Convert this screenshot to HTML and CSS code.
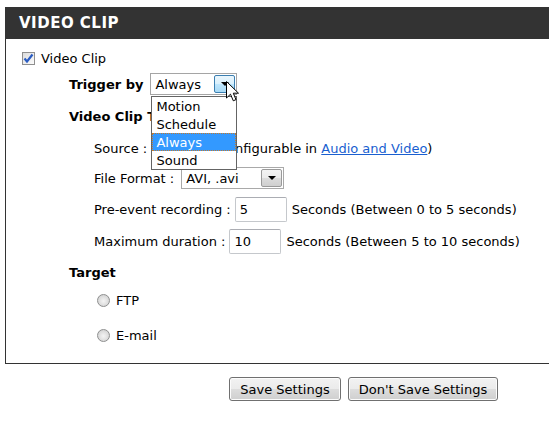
FILE: index.html
```html
<!DOCTYPE html>
<html lang="en">
<head>
	<meta charset="UTF-8">
	<title>Video Clip</title>
	<link rel="stylesheet" href="styles.css">
</head>
<body>
	<div class="page">
		<div class="panel">
			<div class="panel-head">VIDEO CLIP</div>
			<div class="panel-body">
				<label class="row row-check">
					<span class="checkbox">
						<svg width="11" height="11" viewBox="0 0 11 11"><path d="M1.5 5.5 L4 8.5 L9.5 1.5" fill="none" stroke="#2a5cc2" stroke-width="2.2"/></svg>
					</span>
					Video Clip
				</label>

				<div class="row row-trigger indent">
					<b class="label-b">Trigger by</b>
					<div class="select select-trigger">
						<span class="select-text">Always</span>
						<span class="select-btn hover"><i class="arrow-down"></i></span>
						<ul class="drop-list">
							<li>Motion</li>
							<li>Schedule</li>
							<li class="on">Always</li>
							<li>Sound</li>
						</ul>
						<svg class="cursor" width="14" height="22" viewBox="0 0 14 22"><path d="M0.5 0.5 L0.5 17 L4.5 13.2 L7.3 19.8 L10 18.6 L7.3 12.2 L12.5 12.2 Z" fill="#fff" stroke="#000" stroke-width="1"/></svg>
					</div>
				</div>

				<div class="row row-type indent">
					<b class="label-b">Video Clip Type</b>
				</div>

				<div class="row row-source indent-2">
					<span>Source : Stream 1 (configurable in <a href="javascript:;">Audio and Video</a>)</span>
				</div>

				<div class="row row-format indent-2 gap">
					<span>File Format :</span>
					<div class="select select-format">
						<span class="select-text">AVI, .avi</span>
						<span class="select-btn"><i class="arrow-down"></i></span>
					</div>
				</div>

				<div class="row row-pre indent-2 gap">
					<span>Pre-event recording :</span>
					<input type="text" class="text-in" value="5">
					<span>Seconds (Between 0 to 5 seconds)</span>
				</div>

				<div class="row row-max indent-2 gap">
					<span>Maximum duration :</span>
					<input type="text" class="text-in" value="10">
					<span>Seconds (Between 5 to 10 seconds)</span>
				</div>

				<div class="row row-target indent">
					<b class="label-b">Target</b>
				</div>

				<label class="row row-ftp indent-3">
					<span class="radio"></span>
					FTP
				</label>

				<label class="row row-mail indent-3">
					<span class="radio"></span>
					E-mail
				</label>
			</div>
		</div>

		<div class="buttons">
			<button class="btn btn-save">Save Settings</button>
			<button class="btn btn-cancel">Don't Save Settings</button>
		</div>
	</div>
</body>
</html>
```

FILE: styles.css
```css
* {
	box-sizing: border-box;
}

body {
	margin: 0;
	background: #fff;
	font-family: "DejaVu Sans", sans-serif;
	font-size: 13px;
	color: #000;
}

.page {
	width: 549px;
	height: 431px;
	overflow: hidden;
}

.panel {
	width: 620px;
	margin: 7px 0 0 5px;
	border: 1px solid #333;
	border-top: 0;
}

.panel-head {
	display: flex;
	align-items: center;
	height: 32px;
	padding-left: 13px;
	background: #333;
	color: #fff;
	font-size: 15px;
	font-weight: bold;
	letter-spacing: 0.5px;
}

.panel-body {
	display: flex;
	flex-direction: column;
	padding: 0 0 16px 16px;
}

.row {
	display: flex;
	align-items: center;
	height: 24px;
	white-space: nowrap;
}

.gap {
	gap: 6px;
}

.indent {
	padding-left: 47px;
}

.indent-2 {
	padding-left: 72px;
}

.indent-3 {
	padding-left: 75px;
}

.row-check {
	height: 20px;
	margin-top: 9px;
	gap: 6px;
}
.row-trigger { margin-top: 4px; }
.row-type { margin-top: 8px; }
.row-source { margin-top: 8px; }
.row-format { margin-top: 6px; }
.row-pre { height: 25px; margin-top: 7px; }
.row-max { height: 25px; margin-top: 7px; }
.row-target { margin-top: 6px; }
.row-ftp { margin-top: 4px; }
.row-mail { margin-top: 11px; }

.label-b {
	font-weight: bold;
}

a {
	color: #1a5fd0;
	text-decoration: underline;
}

/* checkbox and radio, drawn like the old windows ones */
.checkbox {
	display: flex;
	align-items: center;
	justify-content: center;
	width: 13px;
	height: 13px;
	border: 1px solid #8f8f8f;
	background: linear-gradient(135deg, #dcdcdc, #fbfbfb);
}

.radio {
	width: 13px;
	height: 13px;
	margin-right: 6px;
	border: 1px solid #8e8f8f;
	border-radius: 50%;
	background: radial-gradient(circle at 50% 55%, #f4f4f4 0, #e4e4e4 40%, #c9c9c9 100%);
}

/* selects */
.select {
	position: relative;
	display: flex;
	align-items: center;
	height: 22px;
	border: 1px solid #a5a5a5;
	background: #fff;
}

.select-trigger {
	width: 87px;
	margin-left: 7px;
}

.select-format {
	width: 103px;
	margin-left: 1px;
	border-color: #a9a9a9;
}

.select-text {
	flex: 1;
	padding-left: 4px;
}

.select-btn {
	display: flex;
	align-items: center;
	justify-content: center;
	width: 21px;
	height: 18px;
	margin-right: 1px;
	border: 1px solid #9a9a9a;
	border-radius: 2px;
	background: linear-gradient(#f3f3f3 0, #ebebeb 50%, #dcdcdc 50%, #cfcfcf 100%);
}

.select-btn.hover {
	border-color: #3c7fb1;
	background: linear-gradient(#eaf6fd 0, #d9f0fc 50%, #bee6fd 50%, #a7d9f5 100%);
}

.arrow-down {
	width: 0;
	height: 0;
	border-left: 4px solid transparent;
	border-right: 4px solid transparent;
	border-top: 4px solid #000;
}

.drop-list {
	position: absolute;
	top: 22px;
	left: 0;
	width: 86px;
	margin: 0;
	padding: 0;
	list-style: none;
	border: 1px solid #646464;
	background: #fff;
	z-index: 2;
}

.drop-list li {
	height: 18px;
	padding-left: 3px;
	line-height: 18px;
	border: 1px solid transparent;
}

.drop-list .on {
	background: #3399ff;
	color: #fff;
	border: 1px dotted #c47a2c;
}

.cursor {
	position: absolute;
	left: 75px;
	top: 7px;
	z-index: 3;
}

/* text inputs */
.text-in {
	width: 52px;
	height: 25px;
	margin: 0 -1px 0 -2px;
	padding: 0 4px;
	border: 1px solid #c5c8cc;
	border-top-color: #abadb3;
	border-radius: 2px;
	font-family: "DejaVu Sans", sans-serif;
	font-size: 13px;
	outline: none;
}

/* buttons */
.buttons {
	display: flex;
	gap: 7px;
	margin-top: 13px;
	padding-left: 229px;
}

.btn {
	height: 24px;
	padding: 0;
	border: 1px solid #707070;
	border-radius: 3px;
	background: linear-gradient(#f2f2f2 0, #ebebeb 50%, #dddddd 50%, #cfcfcf 100%);
	box-shadow: inset 0 0 0 1px #fcfcfc;
	font-family: "DejaVu Sans", sans-serif;
	font-size: 13px;
	color: #000;
}

.btn-save {
	width: 112px;
}

.btn-cancel {
	width: 150px;
}
```
